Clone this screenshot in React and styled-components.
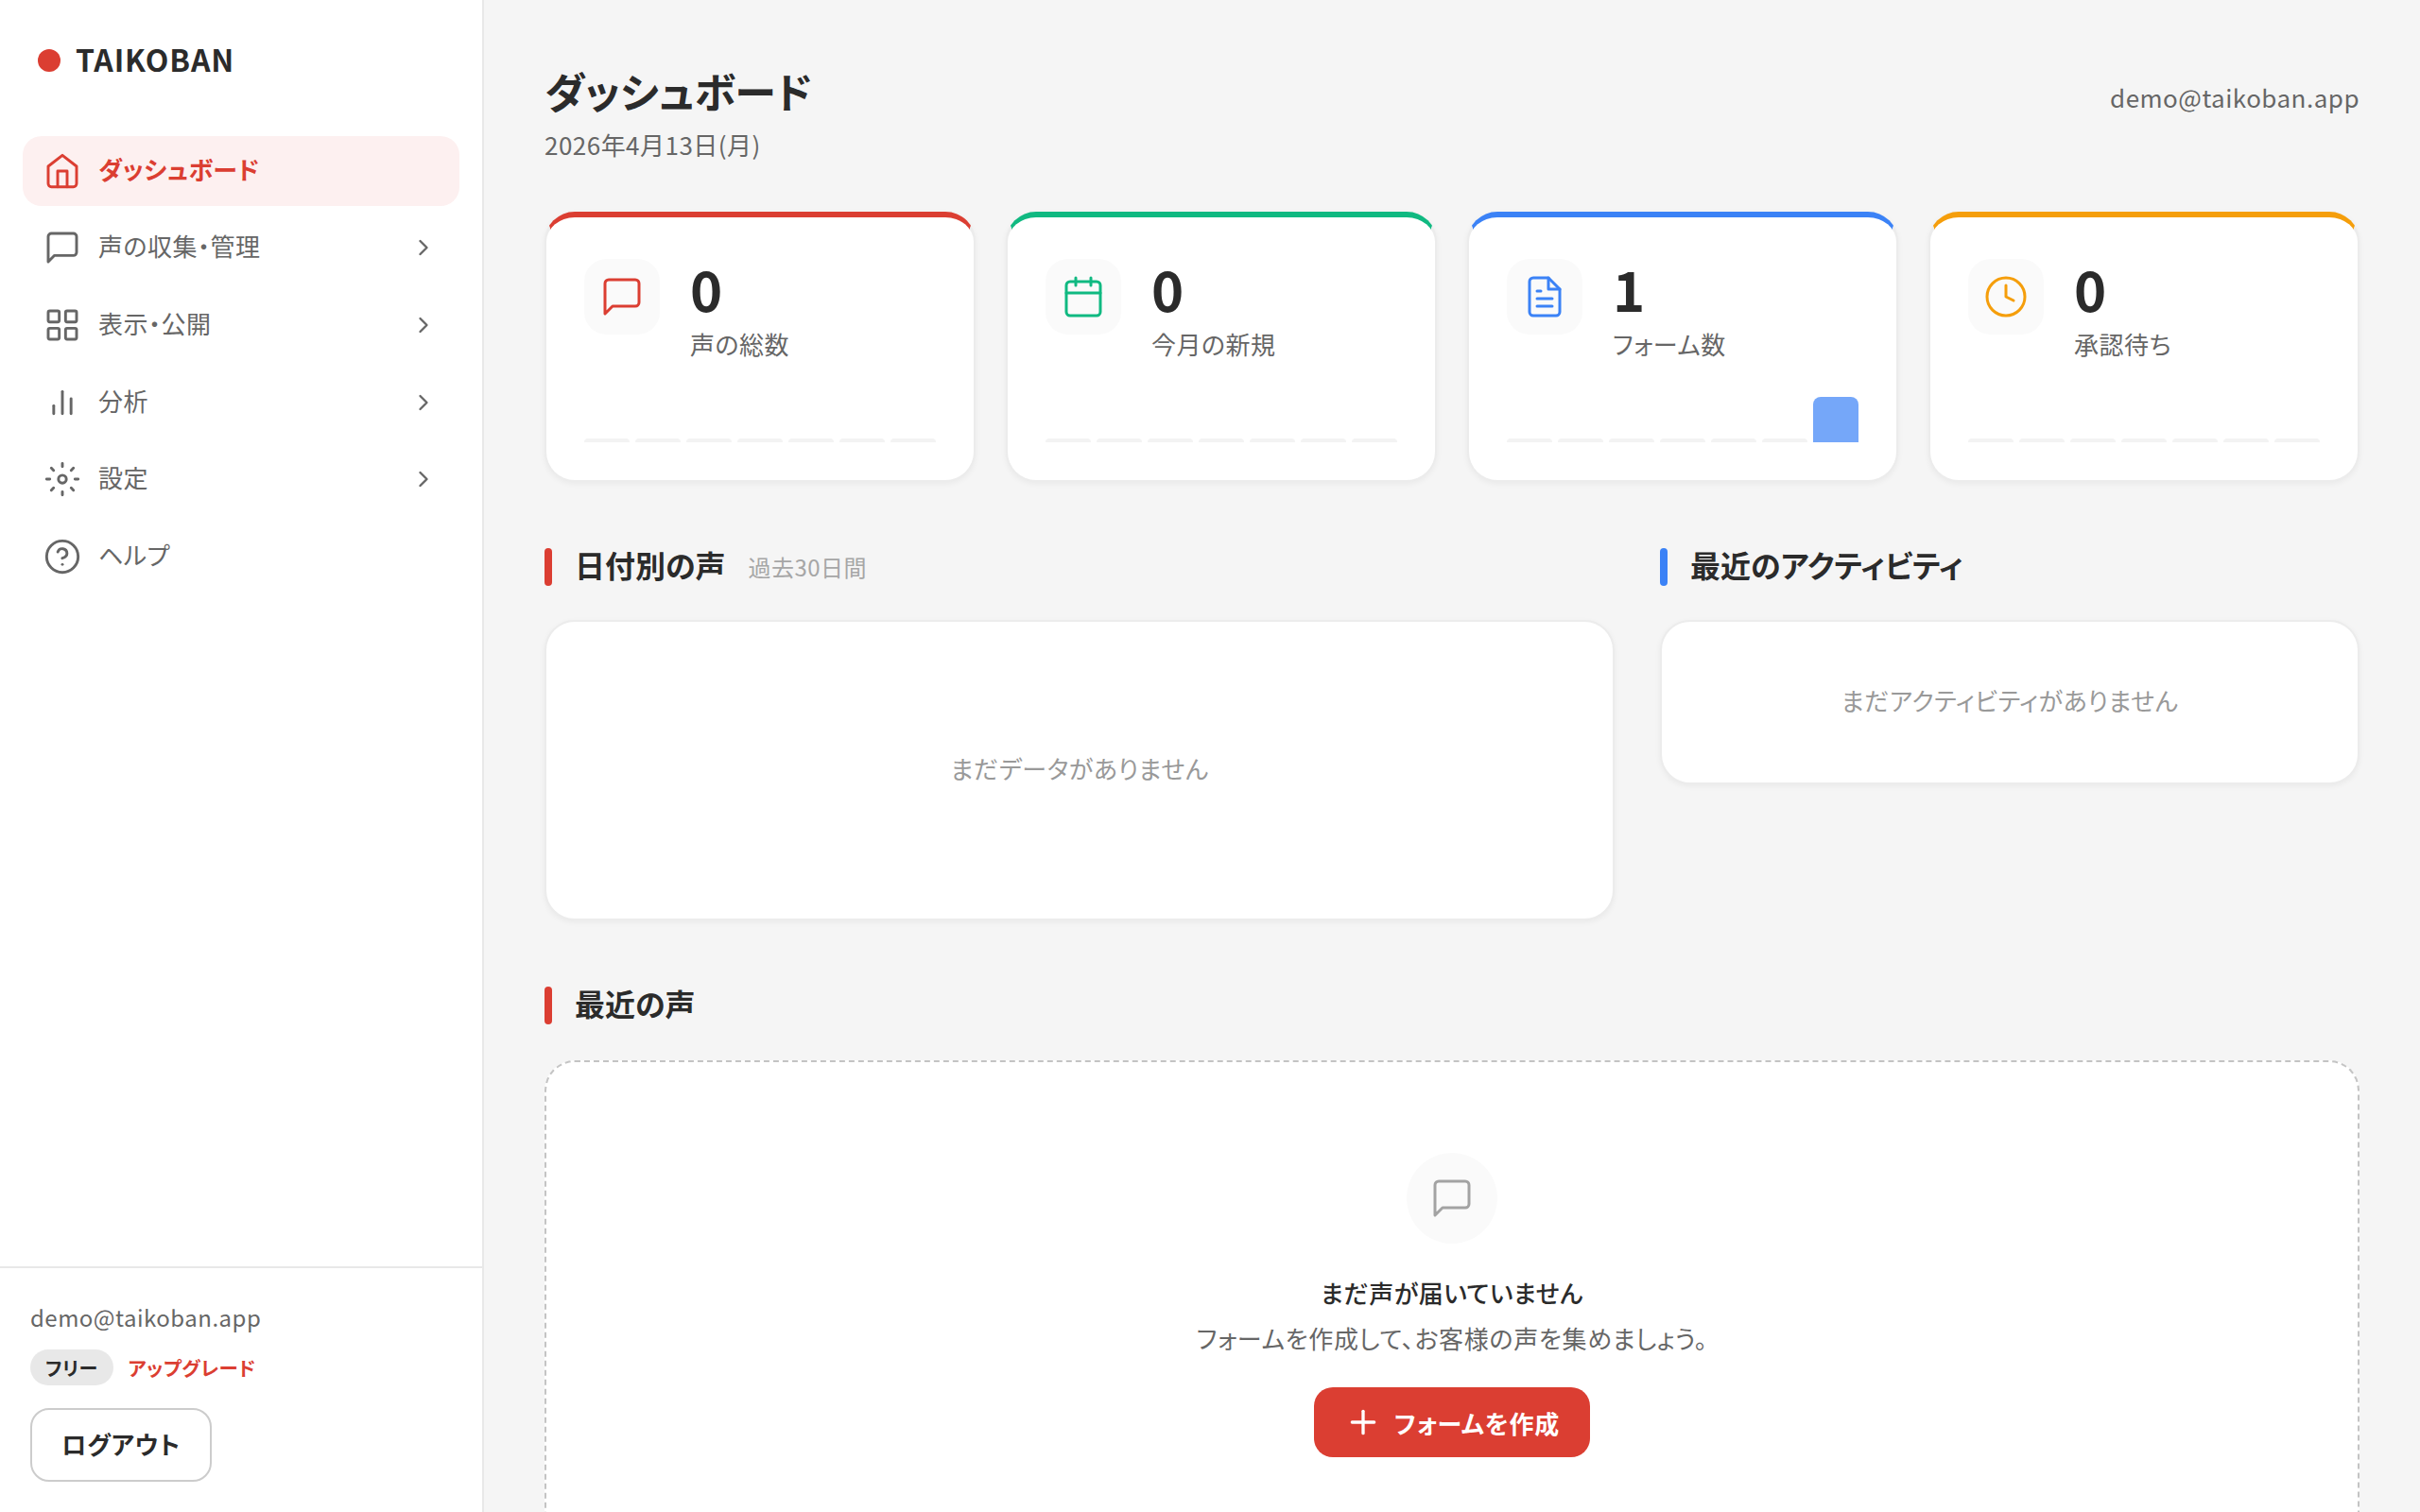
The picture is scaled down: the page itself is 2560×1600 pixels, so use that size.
import React from "react";
import styled, { createGlobalStyle } from "styled-components";

const RED = "#db3e32";
const GREEN = "#10b981";
const BLUE = "#3b82f6";
const AMBER = "#f59e0b";

const GlobalStyle = createGlobalStyle`
  html, body {
    margin: 0;
    height: 100%;
    overflow: hidden;
    background: #f5f5f5;
  }
  body {
    font-family: "Noto Sans CJK JP", "Noto Sans", sans-serif;
    font-feature-settings: "palt";
    letter-spacing: 0.03em;
    color: #2b2b2b;
  }
  * { box-sizing: border-box; }
`;

const Shell = styled.div`
  display: flex;
  height: 1600px;
  overflow: hidden;
`;
const Sidebar = styled.aside`
  width: 512px;
  flex: none;
  display: flex;
  flex-direction: column;
  background: #fff;
  border-right: 2px solid #e8e8e8;
`;
const Logo = styled.div`
  display: flex;
  align-items: center;
  gap: 16px;
  height: 64px;
  margin: 32px 0 48px 40px;
`;
const LogoDot = styled.span`
  width: 24px;
  height: 24px;
  border-radius: 50%;
  background: ${RED};
`;
const LogoText = styled.span`
  font-size: 32px;
  line-height: 60px;
  height: 64px;
  font-weight: 700;
  letter-spacing: 0.025em;
  color: #2b2b2b;
`;
const Nav = styled.nav`
  display: flex;
  flex-direction: column;
  gap: 8px;
  padding: 0 24px;
`;
const NavItem = styled.a`
  display: flex;
  align-items: center;
  gap: 18px;
  height: 73.6px;
  padding: 0 24px 0 22px;
  border-radius: 20px;
  font-size: 26px;
  font-weight: ${(p) => (p.$active ? 700 : 400)};
  color: ${(p) => (p.$active ? RED : "#666")};
  background: ${(p) => (p.$active ? "#fdf0f0" : "transparent")};
`;
const NavLabel = styled.span`
  flex: 1;
  padding-bottom: 5px;
`;
const SidebarFooter = styled.div`
  margin-top: auto;
  padding: 32px 32px 32px;
  border-top: 2px solid #e8e8e8;
`;
const FooterEmail = styled.div`
  font-size: 24px;
  line-height: 40px;
  color: #666;
`;
const PlanRow = styled.div`
  display: flex;
  align-items: center;
  gap: 16px;
  margin-top: 14px;
`;
const PlanBadge = styled.span`
  display: flex;
  align-items: center;
  height: 38px;
  padding: 0 16px;
  border-radius: 19px;
  background: #e8e8e8;
  font-size: 20px;
  font-weight: 700;
`;
const UpgradeLink = styled.a`
  font-size: 20.5px;
  font-weight: 700;
  color: ${RED};
`;
const LogoutButton = styled.button`
  display: block;
  width: 192px;
  height: 78px;
  margin-top: 24px;
  padding: 0 0 4px;
  background: #fff;
  border: 2px solid #ccc;
  border-radius: 20px;
  font: inherit;
  font-size: 26px;
  font-weight: 700;
  letter-spacing: 0.03em;
  color: #2b2b2b;
`;
const Main = styled.main`
  flex: 1;
  min-width: 0;
  padding: 64px 64px 0;
`;
const Header = styled.header`
  display: flex;
  justify-content: space-between;
  align-items: flex-start;
  height: 160px;
`;
const PageTitle = styled.h1`
  margin: 0;
  font-size: 44px;
  line-height: 64px;
  font-weight: 700;
  letter-spacing: 0;
`;
const PageDate = styled.div`
  margin-top: 5px;
  font-size: 26px;
  line-height: 40px;
  color: #666;
`;
const HeaderEmail = styled.div`
  margin-top: 19px;
  font-size: 26px;
  line-height: 40px;
  color: #666;
`;
const StatGrid = styled.section`
  display: grid;
  grid-template-columns: repeat(4, 1fr);
  gap: 32px;
`;
const StatCard = styled.div`
  display: flex;
  flex-direction: column;
  justify-content: space-between;
  height: 286px;
  padding: 44px 40px 40px;
  background: #fff;
  border: 2px solid #ececec;
  border-top: 6px solid ${(p) => p.$accent};
  border-radius: 32px;
  box-shadow: 0 2px 6px rgba(0, 0, 0, 0.05);
`;
const StatTop = styled.div`
  display: flex;
  gap: 32px;
`;
const StatIcon = styled.div`
  display: flex;
  align-items: center;
  justify-content: center;
  width: 80px;
  height: 80px;
  border-radius: 24px;
  background: #fafafa;
  color: ${(p) => p.$accent};
`;
const StatValue = styled.div`
  font-size: 58px;
  line-height: 62px;
  font-weight: 700;
  letter-spacing: 0;
`;
const StatLabel = styled.div`
  margin-top: 10px;
  font-size: 26px;
  line-height: 36px;
  color: #666;
`;
const Spark = styled.div`
  display: flex;
  align-items: flex-end;
  gap: 6px;
  height: 48px;
`;
const SparkBar = styled.div`
  flex: 1;
  height: ${(p) => (p.$on ? "48px" : "4px")};
  border-radius: 8px 8px 0 0;
  background: ${(p) => (p.$on ? p.$accent : "#f3f3f3")};
  opacity: ${(p) => (p.$on ? 0.7 : 1)};
`;
const TwoCols = styled.section`
  display: grid;
  grid-template-columns: 1fr 740px;
  gap: 48px;
  margin-top: 70px;
  align-items: start;
`;
const SectionHead = styled.div`
  display: flex;
  align-items: center;
  height: 40px;
  margin-bottom: 36px;
`;
const SectionBar = styled.span`
  width: 8px;
  height: 40px;
  border-radius: 4px;
  margin-right: 24px;
  background: ${(p) => p.$color};
`;
const SectionTitle = styled.h2`
  margin: 0 0 6px;
  font-size: 32px;
  font-weight: 700;
  letter-spacing: 0;
`;
const SectionSub = styled.span`
  margin: 0 0 2px 24px;
  font-size: 24px;
  color: #a6a6a6;
`;
const Panel = styled.div`
  display: flex;
  align-items: center;
  justify-content: center;
  height: ${(p) => p.$height}px;
  padding-bottom: 6px;
  background: #fff;
  border: 2px solid #ececec;
  border-radius: 32px;
  box-shadow: 0 2px 6px rgba(0, 0, 0, 0.05);
  font-size: 26px;
  color: #999;
`;
const RecentSection = styled.section`
  margin-top: 70px;
`;
const EmptyPanel = styled.div`
  display: flex;
  flex-direction: column;
  align-items: center;
  height: 600px;
  margin-top: 38px;
  padding-top: 96px;
  background: #fff;
  border: 2px dashed #c4c4c4;
  border-radius: 32px;
`;
const EmptyIcon = styled.div`
  display: flex;
  align-items: center;
  justify-content: center;
  width: 96px;
  height: 96px;
  border-radius: 50%;
  background: #fafafa;
  color: #a3a3a3;
`;
const EmptyTitle = styled.div`
  margin-top: 32px;
  font-size: 26px;
  line-height: 40px;
  font-weight: 500;
`;
const EmptyText = styled.div`
  margin-top: 8px;
  font-size: 26px;
  line-height: 40px;
  letter-spacing: 0.026em;
  color: #666;
`;
const CreateButton = styled.button`
  display: flex;
  align-items: center;
  gap: 13px;
  height: 74px;
  margin-top: 32px;
  padding: 0 32px;
  background: ${RED};
  border: 0;
  border-radius: 20px;
  font: inherit;
  font-size: 26px;
  font-weight: 700;
  letter-spacing: 0.03em;
  color: #fff;
`;

const Icon = ({ size = 40, width = 1.75, children }) => (
  <svg
    width={size}
    height={size}
    viewBox="0 0 24 24"
    fill="none"
    stroke="currentColor"
    strokeWidth={width}
    strokeLinecap="round"
    strokeLinejoin="round"
    style={{ flex: "none" }}
  >
    {children}
  </svg>
);

const HomeIcon = () => (
  <Icon>
    <path d="M3 9l9-7 9 7v11a2 2 0 0 1-2 2H5a2 2 0 0 1-2-2z" />
    <polyline points="9 22 9 12 15 12 15 22" />
  </Icon>
);
const MessageIcon = (props) => (
  <Icon {...props}>
    <path d="M21 15a2 2 0 0 1-2 2H7l-4 4V5a2 2 0 0 1 2-2h14a2 2 0 0 1 2 2z" />
  </Icon>
);
const GridIcon = () => (
  <Icon>
    <rect x="3" y="3" width="7" height="7" rx="1" />
    <rect x="14" y="3" width="7" height="7" rx="1" />
    <rect x="14" y="14" width="7" height="7" rx="1" />
    <rect x="3" y="14" width="7" height="7" rx="1" />
  </Icon>
);
const ChartIcon = () => (
  <Icon>
    <line x1="17.5" y1="19" x2="17.5" y2="9.5" />
    <line x1="12" y1="19" x2="12" y2="5" />
    <line x1="6.5" y1="19" x2="6.5" y2="14" />
  </Icon>
);
const SettingsIcon = () => (
  <Icon>
    <circle cx="12" cy="12" r="2.5" />
    <path d="M12 2v2M12 20v2M5 5l1.4 1.4M17.6 17.6L19 19M2 12h2M20 12h2M5 19l1.4-1.4M17.6 6.4L19 5" />
  </Icon>
);
const HelpIcon = () => (
  <Icon>
    <circle cx="12" cy="12" r="10" />
    <path d="M9.09 9a3 3 0 0 1 5.83 1c0 2-3 3-3 3" />
    <line x1="12" y1="17" x2="12.01" y2="17" />
  </Icon>
);
const ChevronIcon = () => (
  <Icon size={28} width={2}>
    <polyline points="9 18 15 12 9 6" />
  </Icon>
);
const CalendarIcon = ({ size, width }) => (
  <Icon size={size} width={width}>
    <rect x="3" y="4" width="18" height="18" rx="2" />
    <line x1="16" y1="2" x2="16" y2="6" />
    <line x1="8" y1="2" x2="8" y2="6" />
    <line x1="3" y1="10" x2="21" y2="10" />
  </Icon>
);
const FileIcon = ({ size, width }) => (
  <Icon size={size} width={width}>
    <path d="M14 2H6a2 2 0 0 0-2 2v16a2 2 0 0 0 2 2h12a2 2 0 0 0 2-2V8z" />
    <polyline points="14 2 14 8 20 8" />
    <line x1="16" y1="13" x2="8" y2="13" />
    <line x1="16" y1="17" x2="8" y2="17" />
    <polyline points="10 9 9 9 8 9" />
  </Icon>
);
const ClockIcon = ({ size, width }) => (
  <Icon size={size} width={width}>
    <circle cx="12" cy="12" r="10" />
    <polyline points="12 6 12 12 16 14" />
  </Icon>
);
const PlusIcon = () => (
  <Icon size={40} width={2}>
    <line x1="12" y1="5" x2="12" y2="19" />
    <line x1="5" y1="12" x2="19" y2="12" />
  </Icon>
);

const navItems = [
  { label: "ダッシュボード", icon: <HomeIcon />, active: true },
  { label: "声の収集・管理", icon: <MessageIcon />, more: true },
  { label: "表示・公開", icon: <GridIcon />, more: true },
  { label: "分析", icon: <ChartIcon />, more: true },
  { label: "設定", icon: <SettingsIcon />, more: true },
  { label: "ヘルプ", icon: <HelpIcon /> },
];

const stats = [
  { label: "声の総数", value: 0, accent: RED, StatGlyph: MessageIcon },
  { label: "今月の新規", value: 0, accent: GREEN, StatGlyph: CalendarIcon },
  { label: "フォーム数", value: 1, accent: BLUE, StatGlyph: FileIcon, lastOn: true },
  { label: "承認待ち", value: 0, accent: AMBER, StatGlyph: ClockIcon },
];

const App = () => {
  return (
    <Shell>
      <GlobalStyle />
      <Sidebar>
        <Logo>
          <LogoDot />
          <LogoText>TAIKOBAN</LogoText>
        </Logo>
        <Nav>
          {navItems.map((item) => (
            <NavItem key={item.label} $active={item.active}>
              {item.icon}
              <NavLabel>{item.label}</NavLabel>
              {item.more && <ChevronIcon />}
            </NavItem>
          ))}
        </Nav>
        <SidebarFooter>
          <FooterEmail>demo@taikoban.app</FooterEmail>
          <PlanRow>
            <PlanBadge>フリー</PlanBadge>
            <UpgradeLink>アップグレード</UpgradeLink>
          </PlanRow>
          <LogoutButton>ログアウト</LogoutButton>
        </SidebarFooter>
      </Sidebar>
      <Main>
        <Header>
          <div>
            <PageTitle>ダッシュボード</PageTitle>
            <PageDate>2026年4月13日(月)</PageDate>
          </div>
          <HeaderEmail>demo@taikoban.app</HeaderEmail>
        </Header>
        <StatGrid>
          {stats.map(({ label, value, accent, StatGlyph, lastOn }) => (
            <StatCard key={label} $accent={accent}>
              <StatTop>
                <StatIcon $accent={accent}>
                  <StatGlyph size={48} width={1.5} />
                </StatIcon>
                <div>
                  <StatValue>{value}</StatValue>
                  <StatLabel>{label}</StatLabel>
                </div>
              </StatTop>
              <Spark>
                {[0, 1, 2, 3, 4, 5, 6].map((i) => (
                  <SparkBar key={i} $accent={accent} $on={lastOn && i === 6} />
                ))}
              </Spark>
            </StatCard>
          ))}
        </StatGrid>
        <TwoCols>
          <div>
            <SectionHead>
              <SectionBar $color={RED} />
              <SectionTitle>日付別の声</SectionTitle>
              <SectionSub>過去30日間</SectionSub>
            </SectionHead>
            <Panel $height={318}>まだデータがありません</Panel>
          </div>
          <div>
            <SectionHead>
              <SectionBar $color={BLUE} />
              <SectionTitle>最近のアクティビティ</SectionTitle>
            </SectionHead>
            <Panel $height={174}>まだアクティビティがありません</Panel>
          </div>
        </TwoCols>
        <RecentSection>
          <SectionHead>
            <SectionBar $color={RED} />
            <SectionTitle>最近の声</SectionTitle>
          </SectionHead>
          <EmptyPanel>
            <EmptyIcon>
              <MessageIcon size={48} width={1.5} />
            </EmptyIcon>
            <EmptyTitle>まだ声が届いていません</EmptyTitle>
            <EmptyText>フォームを作成して、お客様の声を集めましょう。</EmptyText>
            <CreateButton>
              <PlusIcon />
              フォームを作成
            </CreateButton>
          </EmptyPanel>
        </RecentSection>
      </Main>
    </Shell>
  );
};

export default App;
